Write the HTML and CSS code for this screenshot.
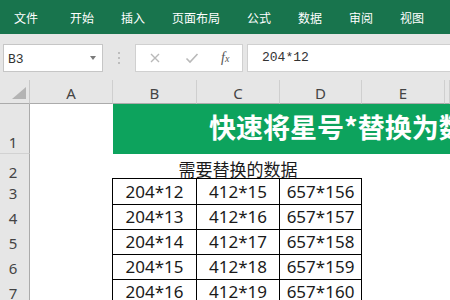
FILE: index.html
```html
<!DOCTYPE html>
<html lang="zh-CN">
<head>
    <meta charset="UTF-8">
    <title>Excel - 快速将星号替换</title>
    <link rel="stylesheet" href="styles.css">
</head>
<body>
    <!-- Ribbon tabs -->
    <div class="tabs">
        <span class="tab tab-first">文件</span>
        <span class="tab">开始</span>
        <span class="tab">插入</span>
        <span class="tab">页面布局</span>
        <span class="tab">公式</span>
        <span class="tab">数据</span>
        <span class="tab">审阅</span>
        <span class="tab">视图</span>
    </div>

    <!-- Formula bar -->
    <div class="formula-bar">
        <div class="name-box">
            <span>B3</span>
            <span class="drop-arrow"></span>
        </div>
        <div class="grip"><i></i><i></i><i></i></div>
        <div class="fx-box">
            <svg class="fx-icon" width="12" height="12" viewBox="0 0 12 12">
                <path d="M2 2 L10 10 M10 2 L2 10" stroke="#b9b9b9" stroke-width="1.4" fill="none"/>
            </svg>
            <svg class="fx-icon" width="14" height="12" viewBox="0 0 14 12">
                <path d="M1.5 6.5 L5 10 L12.5 2" stroke="#b9b9b9" stroke-width="1.6" fill="none"/>
            </svg>
            <span class="fx-text">f<sub>x</sub></span>
        </div>
        <div class="formula-input">204*12</div>
    </div>

    <!-- Sheet -->
    <div class="sheet">
        <div class="sheet-row col-heads">
            <div class="corner"><span class="corner-tri"></span></div>
            <div class="col-head">A</div>
            <div class="col-head">B</div>
            <div class="col-head">C</div>
            <div class="col-head">D</div>
            <div class="col-head">E</div>
            <div class="col-head"></div>
        </div>

        <div class="sheet-row row-title">
            <div class="row-head">1</div>
            <div class="cell"></div>
            <div class="title-cell">快速将星号*替换为数值</div>
        </div>

        <div class="sheet-row row-normal">
            <div class="row-head">2</div>
            <div class="cell"></div>
            <div class="caption-cell">需要替换的数据</div>
        </div>

        <div class="sheet-row row-normal">
            <div class="row-head">3</div>
            <div class="cell"></div>
            <div class="data data-top data-left">204*12</div>
            <div class="data data-top">412*15</div>
            <div class="data data-top">657*156</div>
        </div>
        <div class="sheet-row row-normal">
            <div class="row-head">4</div>
            <div class="cell"></div>
            <div class="data data-left">204*13</div>
            <div class="data">412*16</div>
            <div class="data">657*157</div>
        </div>
        <div class="sheet-row row-normal">
            <div class="row-head">5</div>
            <div class="cell"></div>
            <div class="data data-left">204*14</div>
            <div class="data">412*17</div>
            <div class="data">657*158</div>
        </div>
        <div class="sheet-row row-normal">
            <div class="row-head">6</div>
            <div class="cell"></div>
            <div class="data data-left">204*15</div>
            <div class="data">412*18</div>
            <div class="data">657*159</div>
        </div>
        <div class="sheet-row row-normal">
            <div class="row-head">7</div>
            <div class="cell"></div>
            <div class="data data-left">204*16</div>
            <div class="data">412*19</div>
            <div class="data">657*160</div>
        </div>
    </div>
</body>
</html>
```

FILE: styles.css
```css
body {
    margin: 0;
    width: 450px;
    height: 300px;
    overflow: hidden;
    background: #fff;
    font-family: "Noto Sans", "Noto Sans CJK SC", sans-serif;
    color: #222;
}

/* ribbon tabs */
.tabs {
    height: 34px;
    background-color: #18744d;
    display: flex;
    align-items: center;
    gap: 27px;
    padding-left: 14px;
    box-sizing: border-box;
}
.tab {
    color: #fff;
    font-family: "Noto Sans CJK SC", sans-serif;
    font-size: 12px;
    line-height: 1;
    padding-top: 1px;
}
.tab-first {
    margin-right: 5px;
}

/* formula bar */
.formula-bar {
    height: 46px;
    background-color: #e6e6e6;
    display: flex;
    align-items: flex-start;
    padding: 10px 0 0 3px;
    box-sizing: border-box;
}
.name-box {
    width: 100px;
    height: 28px;
    box-sizing: border-box;
    background: #fff;
    border: 1px solid #c6c6c6;
    display: flex;
    align-items: center;
    justify-content: space-between;
    padding: 2px 6px 0 4px;
    font-family: "Liberation Mono", monospace;
    font-size: 13px;
    color: #333;
}
.drop-arrow {
    width: 0;
    height: 0;
    border-left: 3.5px solid transparent;
    border-right: 3.5px solid transparent;
    border-top: 4px solid #7a7a7a;
    margin-bottom: 3px;
}
.grip {
    width: 32px;
    height: 28px;
    display: flex;
    flex-direction: column;
    align-items: center;
    justify-content: center;
    gap: 3px;
}
.grip i {
    width: 2px;
    height: 2px;
    background: #bdbdbd;
}
.fx-box {
    width: 108px;
    height: 28px;
    box-sizing: border-box;
    background: #fff;
    border: 1px solid #d0d0d0;
    display: flex;
    align-items: center;
    padding-left: 13px;
    gap: 24px;
}
.fx-text {
    font-family: "Liberation Serif", serif;
    font-style: italic;
    font-size: 14px;
    color: #555;
    margin-left: -2px;
}
.fx-text sub {
    font-size: 10px;
    vertical-align: baseline;
}
.formula-input {
    flex: 1;
    height: 28px;
    margin-left: 4px;
    box-sizing: border-box;
    background: #fff;
    border: 1px solid #d0d0d0;
    border-right: none;
    padding: 5px 0 0 14px;
    font-family: "Liberation Mono", monospace;
    font-size: 13px;
    color: #333;
}

/* sheet grid */
.sheet {
    display: flex;
    flex-direction: column;
}
.sheet-row {
    display: grid;
    grid-template-columns: 30px 83px 84px 83px 82px 83px 1fr;
}
.col-heads {
    height: 24px;
    background-color: #e6e6e6;
}
.corner {
    display: flex;
    justify-content: flex-end;
    align-items: flex-end;
    padding: 0 3px 4px 0;
    border-right: 1px solid #c8c8c8;
    border-bottom: 1px solid #ababab;
}
.corner-tri {
    width: 14px;
    height: 12px;
    background: #b4b4b4;
    clip-path: polygon(100% 0, 100% 100%, 0 100%);
}
.col-head {
    border-right: 1px solid #cfcfcf;
    border-bottom: 1px solid #ababab;
    display: flex;
    align-items: center;
    justify-content: center;
    font-size: 15px;
    color: #444;
    padding-top: 2px;
}
.row-head {
    background-color: #e6e6e6;
    border-right: 1px solid #ababab;
    border-bottom: 1px solid #d2d2d2;
    display: flex;
    align-items: flex-end;
    justify-content: center;
    padding: 0 3px 0 0;
    font-size: 15px;
    line-height: 22px;
    color: #444;
}
.row-title {
    height: 50px;
}
.row-normal {
    height: 25px;
}
.title-cell {
    grid-column: 3 / -1;
    background-color: #0da35d;
    color: #fff;
    font-family: "Noto Sans CJK SC", sans-serif;
    font-weight: 700;
    font-size: 27px;
    line-height: 45px;
    white-space: nowrap;
    overflow: hidden;
    padding-left: 96px;
}
.caption-cell {
    grid-column: 3 / 6;
    text-align: center;
    font-family: "Noto Sans CJK SC", sans-serif;
    font-size: 17px;
    line-height: 30px;
    color: #1a1a1a;
    padding-left: 1px;
}
.data {
    border-right: 1px solid #000;
    border-bottom: 1px solid #000;
    text-align: center;
    font-size: 17px;
    line-height: 25px;
    color: #1a1a1a;
}
.data-top {
    border-top: 1px solid #000;
    margin-top: -1px;
}
.data-left {
    border-left: 1px solid #000;
    margin-left: -1px;
}
```
